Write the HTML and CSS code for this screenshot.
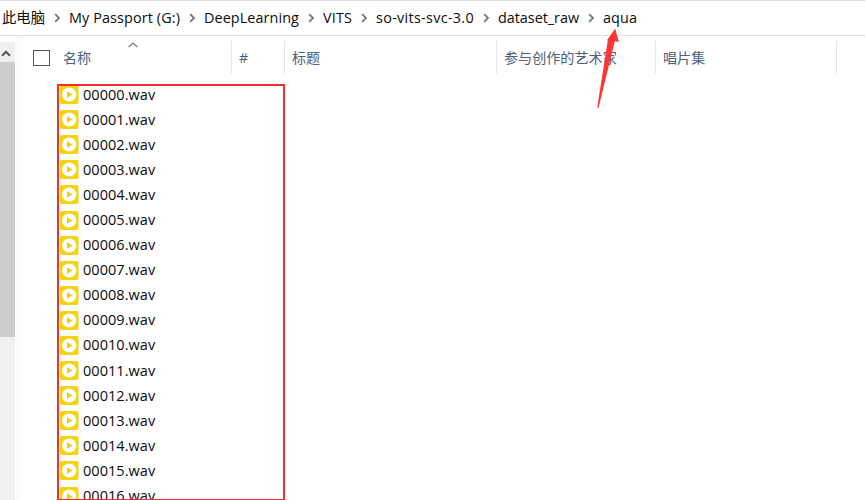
FILE: index.html
```html
<!DOCTYPE html>
<html lang="zh-CN">
<head>
<meta charset="utf-8">
<title>aqua</title>
<link rel="stylesheet" href="styles.css">
</head>
<body>
<div class="window">
  <nav class="path" id="path"></nav>
  <div class="main">
    <div class="scrollbar">
      <div class="up"><svg width="10" height="7" viewBox="0 0 10 7"><path d="M1 5.8 5 1.8 9 5.8" fill="none" stroke="#505050" stroke-width="2"/></svg></div>
      <div class="thumb"></div>
    </div>
    <div class="content">
      <div class="header">
        <div class="col name"><span class="check"></span>名称
          <svg class="sort" width="10" height="6" viewBox="0 0 10 6"><path d="M.7 5 5 1 9.3 5" fill="none" stroke="#777" stroke-width="1.1"/></svg>
        </div>
        <div class="col num">#</div>
        <div class="col title">标题</div>
        <div class="col artist">参与创作的艺术家</div>
        <div class="col album">唱片集</div>
      </div>
      <div class="files" id="files"></div>
    </div>
  </div>
  <div class="highlight"></div>
  <svg class="arrow" width="24" height="82" viewBox="0 0 24 82"><path d="M19.2.5 22.8 14 18.8 13.2 2.6 79.5Q1.5 80.5 1.3 79L11.8 12.5 11 12.2Z" fill="#ff3434"/></svg>
</div>
<script src="script.js"></script>
</body>
</html>
```
FILE: styles.css
```css
* { box-sizing: border-box; }
body {
  margin: 0;
  background: #fff;
  color: #0c0c0c;
  font-family: "Open Sans", "Noto Sans CJK SC", sans-serif;
  font-size: 14.4px;
}
.window {
  position: relative;
  display: flex;
  flex-direction: column;
  width: 865px;
  height: 500px;
  overflow: hidden;
}
.path {
  display: flex;
  flex: none;
  align-items: center;
  height: 36px;
  padding-left: 2px;
  border-top: 1px solid #dcdcdc;
  border-bottom: 1px solid #e2e2e2;
  white-space: nowrap;
}
.crumb { flex: none; line-height: 20px; }
.sep { display: flex; flex: none; justify-content: center; width: 24px; }
.main { display: flex; flex: 1; min-height: 0; }
.scrollbar {
  flex: none;
  width: 15px;
  margin-top: 6px;
  background: #f0f0f0;
}
.up { display: flex; align-items: center; justify-content: center; width: 12px; height: 20px; padding-top: 2px; }
.thumb { height: 275px; background: #cdcdcd; }
.content { flex: 1; margin-left: 2px; border-left: 1px solid #f7f7f7; }
.header { display: flex; height: 33px; margin-top: 5px; color: #4c607a; font-size: 14.1px; }
.col {
  position: relative;
  display: flex;
  align-items: center;
  flex: none;
  padding: 0 0 1px 7px;
  border-right: 1px solid #e8e8e8;
  white-space: nowrap;
}
.name { width: 214px; padding-left: 15px; }
.num { width: 53px; }
.title { width: 212px; }
.artist { width: 159px; }
.album { width: 181px; }
.check { width: 17px; height: 16px; margin: 1px 13px 0 0; border: 1px solid #555; }
.sort { position: absolute; left: 110px; top: 1px; }
.files { padding: 8px 0 0 42px; }
.file { display: flex; align-items: center; height: 25.1px; line-height: 20px; }
.icon { flex: none; margin-right: 4.5px; }
.label { font-size: 14.5px; letter-spacing: 0.05px; }
.highlight {
  position: absolute;
  left: 57px;
  top: 84px;
  width: 228px;
  height: 416px;
  border: 2px solid #fb2c30;
  border-bottom-width: 1px;
}
.arrow { position: absolute; left: 595.5px; top: 28px; }
```
FILE: script.js
```js
const crumbs = [
  ["此电脑", 43], ["My Passport (G:)", 111], ["DeepLearning", 95], ["VITS", 29],
  ["so-vits-svc-3.0", 98], ["dataset_raw", 81], ["aqua", 34]
];
const sep = '<span class="sep"><svg width="7" height="10" viewBox="0 0 7 10"><path d="M1.2 1.2 5 5 1.2 8.8" fill="none" stroke="#777" stroke-width="1.8"/></svg></span>';
const path = document.getElementById("path");
path.innerHTML = crumbs.map(([text, width]) =>
  `<span class="crumb" style="width:${width}px">${text}</span>`).join(sep);

const icon = '<svg class="icon" width="18.5" height="19" viewBox="0 0 18.5 19"><rect width="18.5" height="19" rx="2" fill="#f4d313"/><circle cx="9.2" cy="9.5" r="7.1" fill="#fff"/><path d="M7 6.2v6.6l5.6-3.3z" fill="#efcb13"/></svg>';
document.getElementById("files").innerHTML = Array.from({ length: 17 }, (_, i) =>
  `<div class="file">${icon}<span class="label">${String(i).padStart(5, "0")}.wav</span></div>`).join("");

// Spread the glyphs of each crumb over its slot.
for (const el of path.querySelectorAll(".crumb")) {
  const range = document.createRange();
  range.selectNodeContents(el);
  const slack = parseFloat(el.style.width) - range.getBoundingClientRect().width;
  el.style.letterSpacing = slack / el.textContent.length + "px";
}
```
